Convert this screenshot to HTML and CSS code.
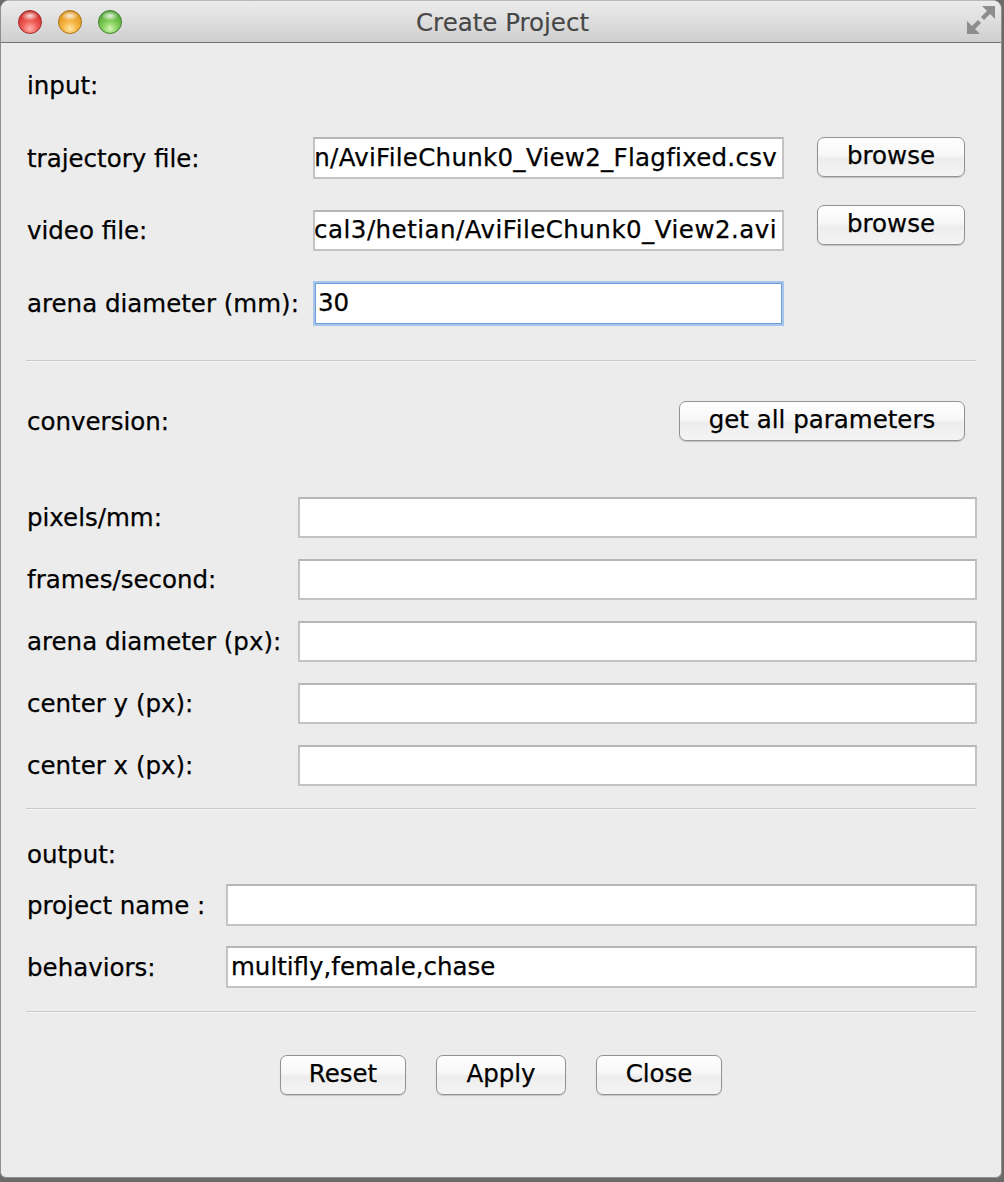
FILE: index.html
```html
<!DOCTYPE html>
<html lang="en">
<head>
<meta charset="utf-8">
<title>Create Project</title>
<link rel="stylesheet" href="styles.css">
</head>
<body>
<div class="window">
  <div class="titlebar">
    <div class="lights">
      <span class="light red"></span>
      <span class="light orange"></span>
      <span class="light green"></span>
    </div>
    <div class="title">Create Project</div>
    <svg class="resize" width="28" height="28" viewBox="0 0 28 28" aria-hidden="true">
      <polygon points="15,0 28,0 28,13" fill="#8d8d8d"/>
      <line x1="22" y1="6" x2="15.5" y2="12.5" stroke="#8d8d8d" stroke-width="4.5"/>
      <polygon points="0,15 0,28 13,28" fill="#8d8d8d"/>
      <line x1="6" y1="22" x2="12.5" y2="15.5" stroke="#8d8d8d" stroke-width="4.5"/>
    </svg>
  </div>

  <div class="content">
    <div class="heading heading-input">input:</div>

    <div class="grid grid-input">
      <div class="lbl">trajectory file:</div>
      <div class="field path"><span class="path-a">n/AviFileChunk0_View2_Flagfixed.csv</span></div>
      <button class="btn browse">browse</button>

      <div class="lbl">video file:</div>
      <div class="field path"><span class="path-b">cal3/hetian/AviFileChunk0_View2.avi</span></div>
      <button class="btn browse browse-up">browse</button>

      <div class="lbl">arena diameter (mm):</div>
      <div class="field focused"><span>30</span></div>
      <div></div>
    </div>

    <div class="sep sep-1"></div>

    <div class="conv-row">
      <div class="lbl">conversion:</div>
      <button class="btn params">get all parameters</button>
    </div>

    <div class="grid grid-conv">
      <div class="lbl">pixels/mm:</div>
      <div class="field"></div>
      <div class="lbl">frames/second:</div>
      <div class="field"></div>
      <div class="lbl">arena diameter (px):</div>
      <div class="field"></div>
      <div class="lbl">center y (px):</div>
      <div class="field"></div>
      <div class="lbl">center x (px):</div>
      <div class="field"></div>
    </div>

    <div class="sep sep-2"></div>

    <div class="heading heading-output">output:</div>

    <div class="grid grid-output">
      <div class="lbl">project name :</div>
      <div class="field"></div>
      <div class="lbl">behaviors:</div>
      <div class="field"><span>multifly,female,chase</span></div>
    </div>

    <div class="sep sep-3"></div>

    <div class="actions">
      <button class="btn act act-reset">Reset</button>
      <button class="btn act act-apply">Apply</button>
      <button class="btn act act-close">Close</button>
    </div>
  </div>
</div>
</body>
</html>
```

FILE: styles.css
```css
html, body {
  margin: 0;
  padding: 0;
}

body {
  width: 1004px;
  height: 1182px;
  background: #6a6a6a;
  overflow: hidden;
  font-family: "DejaVu Sans", "Liberation Sans", sans-serif;
  color: #000;
}

.window {
  box-sizing: border-box;
  width: 1002px;
  height: 1178px;
  background: #ececec;
  border: 1px solid #8f8f8f;
  border-top-color: #b9b9b9;
  border-radius: 9px 9px 6px 6px;
  overflow: hidden;
}

/* ---------- title bar ---------- */
.titlebar {
  box-sizing: border-box;
  height: 42px;
  display: flex;
  align-items: center;
  padding: 0 6px 0 17px;
  background: linear-gradient(#ececec, #dcdcdc 55%, #cfcfcf);
  border-bottom: 1px solid #727272;
}

.lights {
  display: flex;
  gap: 16px;
  width: 230px;
}

.light {
  box-sizing: border-box;
  width: 24px;
  height: 24px;
  border-radius: 50%;
}

.red {
  background:
    radial-gradient(ellipse 9px 5px at 50% 22%, rgba(255,255,255,0.85), rgba(255,255,255,0) 100%),
    radial-gradient(circle at 50% 80%, #ffb3b0 0, #f0605a 35%, #d32f2a 75%, #a82520 100%);
  border: 1px solid #9c2a26;
}

.orange {
  background:
    radial-gradient(ellipse 9px 5px at 50% 22%, rgba(255,255,255,0.85), rgba(255,255,255,0) 100%),
    radial-gradient(circle at 50% 80%, #ffe6a6 0, #f6b645 35%, #e0951d 75%, #b67716 100%);
  border: 1px solid #a87214;
}

.green {
  background:
    radial-gradient(ellipse 9px 5px at 50% 22%, rgba(255,255,255,0.85), rgba(255,255,255,0) 100%),
    radial-gradient(circle at 50% 80%, #d4f7b3 0, #85cf5c 35%, #56a937 75%, #3f862a 100%);
  border: 1px solid #3e7f2a;
}

.title {
  flex: 1;
  text-align: center;
  font-size: 24.5px;
  color: #474747;
  padding-right: 210px;
  padding-top: 2px;
  -webkit-text-stroke: 0.15px #474747;
}

.resize {
  display: block;
  margin-top: -3px;
}

/* ---------- content ---------- */
.content {
  padding: 0 24px 0 25px;
}

.lbl,
.heading,
.btn,
.field {
  font-size: 24.5px;
  font-family: "DejaVu Sans", "Liberation Sans", sans-serif;
  -webkit-text-stroke: 0.25px #000;
}

.heading {
  height: 30px;
  line-height: 30px;
  padding-left: 1px;
}

.heading-input {
  margin-top: 28px;
}

.lbl {
  padding-left: 1px;
  white-space: nowrap;
  align-self: center;
}

.grid {
  display: grid;
}

.grid-input {
  margin-top: 36px;
  grid-template-columns: 287px 471px 1fr;
  grid-template-rows: 42px 41px 42px;
  row-gap: 31px;
}

.grid-conv {
  margin-top: 56px;
  grid-template-columns: 272px 1fr;
  grid-auto-rows: 41px;
  row-gap: 21px;
}

.grid-output {
  margin-top: 14px;
  grid-template-columns: 200px 1fr;
  grid-template-rows: 42px 42px;
  row-gap: 20px;
}

.field {
  box-sizing: border-box;
  background: #fff;
  border: 2px solid #c3c3c3;
  border-top-color: #b6b6b6;
  display: flex;
  align-items: center;
  padding: 0 4px 0 3px;
  overflow: hidden;
  white-space: nowrap;
  line-height: 1;
}

.path {
  justify-content: flex-end;
  padding-right: 5px;
}

.path span {
  flex: none;
}

.path-a {
  letter-spacing: 0.28px;
}

.path-b {
  letter-spacing: 0.48px;
}

.focused {
  border: 1px solid #6f9fd8;
  box-shadow: 0 0 0 2px #a8c5ec;
  margin: 1px 2px 0 2px;
  padding-left: 2px;
}

/* ---------- buttons ---------- */
.btn {
  box-sizing: border-box;
  height: 40px;
  padding: 0 0 2px;
  border: 1px solid #929292;
  border-radius: 7px;
  background: linear-gradient(#ffffff, #f7f7f7 45%, #ededed 55%, #f4f4f4);
  box-shadow: 0 1px 1px rgba(0, 0, 0, 0.18);
  color: #000;
  line-height: 1;
  cursor: default;
}

.browse {
  width: 148px;
  margin-left: 33px;
  align-self: start;
}

.browse-up {
  margin-top: -5px;
}

.sep {
  height: 1px;
  background: #c9c9c9;
  margin-right: 1px;
  box-shadow: 0 1px 0 #f7f7f7;
}

.sep-1 {
  margin-top: 36px;
}

.sep-2 {
  margin-top: 22px;
}

.sep-3 {
  margin-top: 23px;
}

.conv-row {
  margin-top: 40px;
  height: 40px;
  display: flex;
  align-items: center;
  justify-content: space-between;
}

.params {
  width: 286px;
  margin-right: 12px;
}

.heading-output {
  margin-top: 31px;
}

.actions {
  margin-top: 43px;
  display: flex;
  justify-content: center;
  gap: 30px;
  padding-right: 1px;
}

.act {
  width: 126px;
}

.act-apply {
  width: 130px;
}
```
